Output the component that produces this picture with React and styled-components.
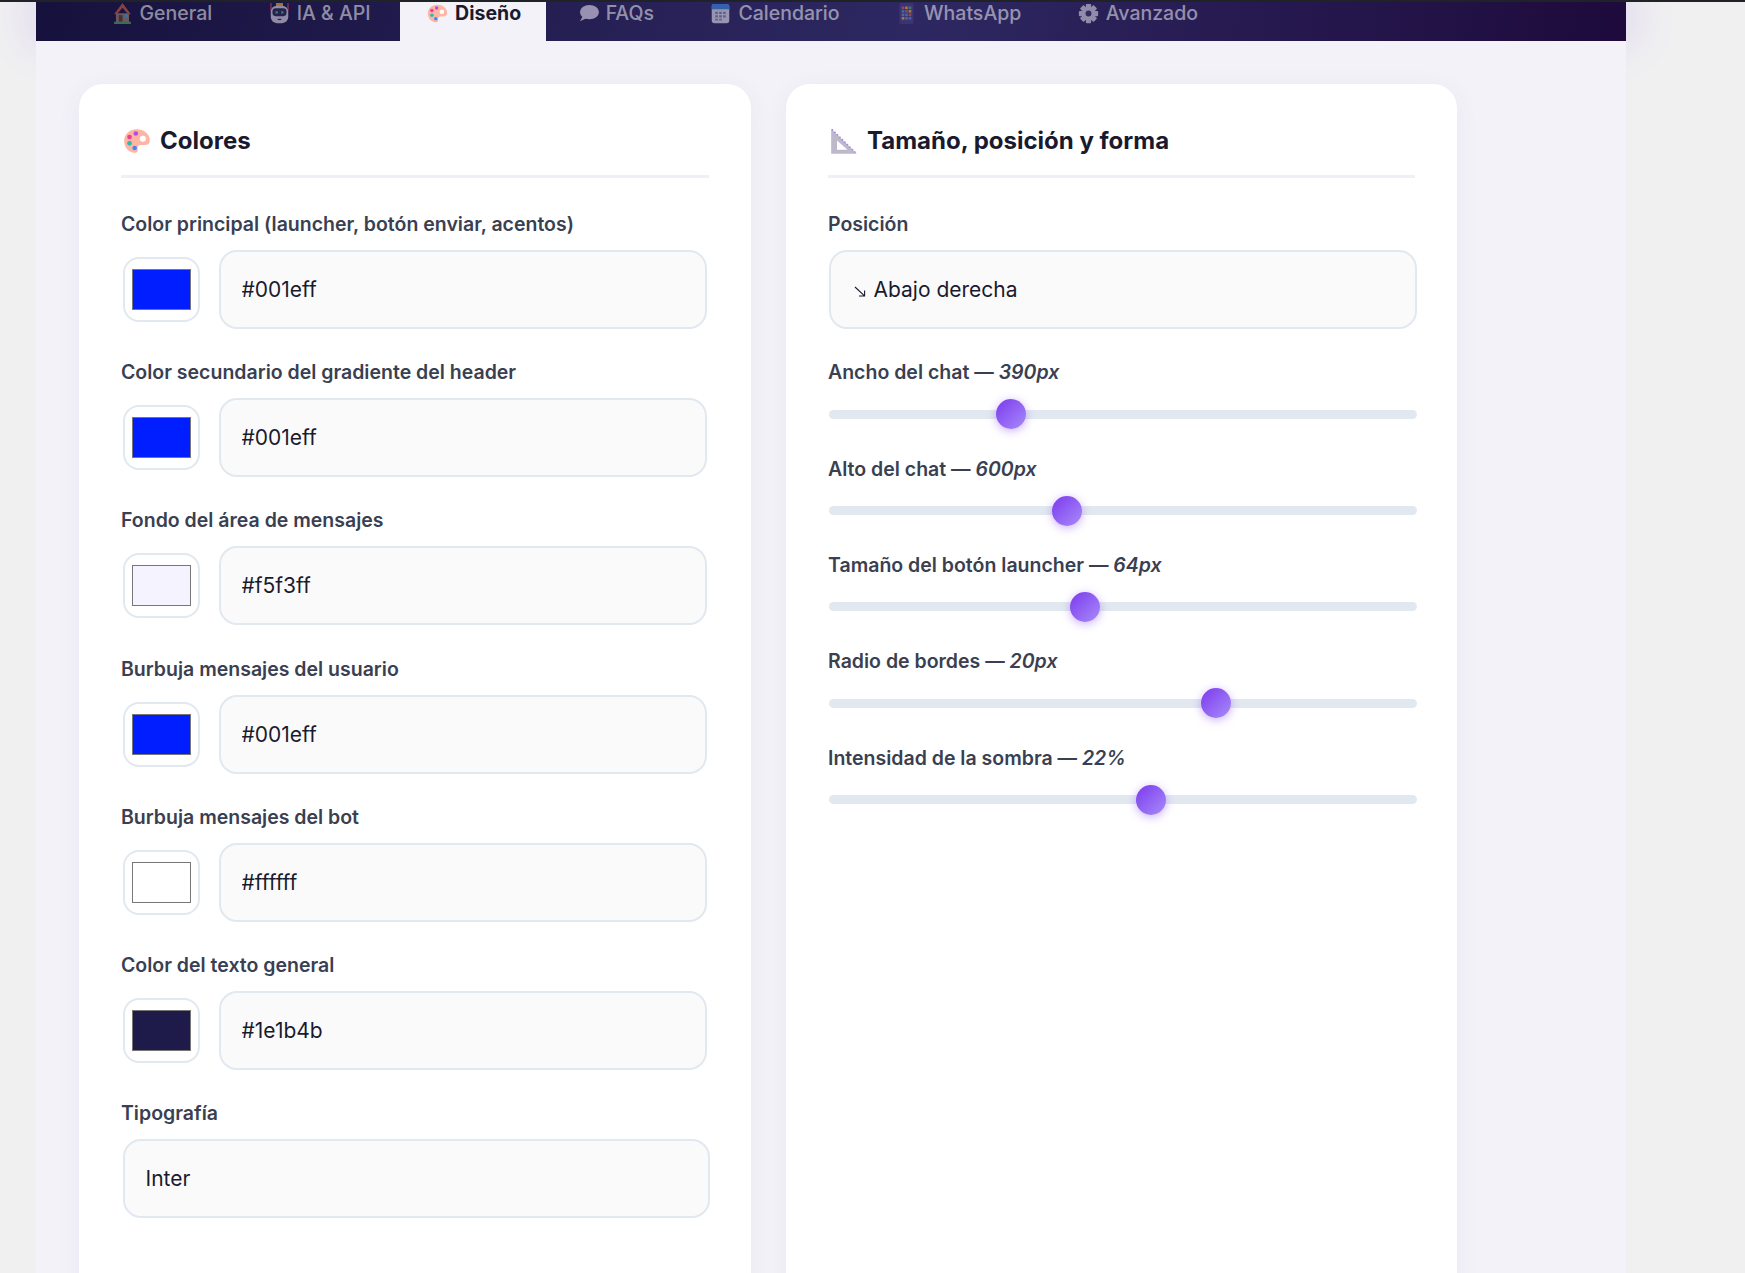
import React from 'react';
import styled, { createGlobalStyle } from 'styled-components';

const GlobalStyle = createGlobalStyle`
  html, body {
    margin: 0;
    padding: 0;
    height: 100%;
    overflow: hidden;
    background: #f0f0f1;
    font-family: Inter, "Liberation Sans", sans-serif;
  }
  * { box-sizing: border-box; }
`;

const TopLine = styled.div`
  position: relative;
  z-index: 2;
  height: 2px;
  background: #1f2328;
`;

const Glow = styled.div`
  position: absolute;
  top: 2px;
  left: 36px;
  width: 1590px;
  height: 30px;
  box-shadow: 0 0 50px rgba(124, 58, 237, 0.32);
`;

const Shell = styled.div`
  position: relative;
  width: 1590px;
  height: 1271px;
  margin-left: 36px;
  background: #f3f2f8;
`;

const TabBar = styled.nav`
  display: flex;
  gap: 4.5px;
  height: 39px;
  padding-left: 48.5px;
  background: linear-gradient(100deg, #16113c 0%, #2e2862 55%, #1e0a3c 100%);
`;

const Tab = styled.button`
  display: flex;
  align-items: flex-start;
  height: 39px;
  padding: 1px 25px 0;
  border: 0;
  border-radius: 0;
  cursor: pointer;
  font-family: inherit;
  font-size: 19.5px;
  line-height: 20px;
  font-weight: ${p => (p.$active ? 700 : 500)};
  background: ${p => (p.$active ? '#f3f2f8' : 'transparent')};
  color: ${p => (p.$active ? '#1a1a2e' : 'rgba(255, 255, 255, 0.52)')};
`;

const TabIcon = styled.span`
  display: flex;
  justify-content: center;
  width: 25px;
  height: 20px;
  margin-right: 5px;
  opacity: ${p => (p.$active ? 1 : 0.58)};
  svg { display: block; width: 21px; height: 21px; }
`;

const Grid = styled.div`
  display: grid;
  grid-template-columns: 672px 671px;
  gap: 35px;
  padding: 43px 0 0 43px;
`;

const Card = styled.section`
  height: 1300px;
  padding: 41.5px 42px;
  background: #fff;
  border-radius: 24px;
  box-shadow: 0 4px 24px rgba(80, 60, 160, 0.06);
`;

const CardTitle = styled.h2`
  display: flex;
  align-items: center;
  gap: 9px;
  height: 30px;
  margin: 0 0 34px;
  box-sizing: content-box;
  padding-bottom: 19.5px;
  border-bottom: 3px solid #f0eff8;
  font-size: 24px;
  line-height: 30px;
  font-weight: 700;
  color: #1a1a2e;
  svg { display: block; width: 28px; height: 28px; flex: none; margin-left: 2px; }
`;

const Field = styled.div`
  margin-bottom: 31.2px;
`;

const Label = styled.label`
  display: block;
  margin-bottom: 14px;
  font-size: 19.5px;
  line-height: 24px;
  font-weight: 600;
  color: #3a3f52;
  em { font-weight: 600; font-style: italic; }
`;

const ColorRow = styled.div`
  display: flex;
  align-items: center;
  gap: 19px;
  width: 583.5px;
  margin-left: 2px;
`;

const Swatch = styled.input`
  flex: none;
  width: 77px;
  height: 65px;
  padding: 0;
  background: #fff;
  border: 2px solid #e2e8f0;
  border-radius: 16px;
  cursor: pointer;

  &::-webkit-color-swatch-wrapper {
    padding: 10px 7px 12px;
    height: 100%;
  }
  &::-webkit-color-swatch {
    height: 100%;
    border: 1px solid #777;
    border-radius: 0;
  }
`;

const TextInput = styled.input`
  flex: 1;
  min-width: 0;
  height: 79px;
  padding: 0 20.5px;
  background: #fafafa;
  border: 2px solid #e2e8f0;
  border-radius: 18px;
  outline: none;
  font-family: inherit;
  font-size: 21px;
  color: #1a1a2e;
`;

const SelectBox = styled.div`
  display: flex;
  align-items: center;
  gap: 8px;
  width: ${p => (p.$wide ? '587.5px' : '587px')};
  height: 79px;
  margin-left: ${p => (p.$wide ? '1px' : '2px')};
  padding: 0 20.5px;
  background: #fafafa;
  border: 2px solid #e2e8f0;
  border-radius: 18px;
  cursor: pointer;
  font-size: 21px;
  color: #1a1a2e;
  svg { display: block; width: 12px; height: 11px; flex: none; margin-top: 4px; margin-left: 2px; }
`;

const SliderField = styled.div`
  margin-bottom: 27.4px;
  ${Label} { margin-bottom: 15px; }
`;

const Range = styled.input`
  display: block;
  width: 588px;
  height: 30px;
  margin: 0 0 0 1px;
  background: transparent;
  appearance: none;
  cursor: pointer;

  &::-webkit-slider-runnable-track {
    height: 9px;
    border-radius: 5px;
    background: #e2e8f0;
  }
  &::-webkit-slider-thumb {
    appearance: none;
    width: 30px;
    height: 30px;
    margin-top: -10.5px;
    border-radius: 50%;
    background: linear-gradient(135deg, #7c3aed, #a78bfa);
    box-shadow: 0 2px 10px rgba(124, 58, 237, 0.4);
  }
`;

const House = () => (
  <svg viewBox="2.500 1 19 22.500">
    <path d="M5 12h14v10H5z" fill="#a98a6e" />
    <path d="M12 1 3 13h3l6-7 6 7h3z" fill="#d9633f" />
    <path d="M8 14h4v8H8z" fill="#6b4630" />
    <path d="M14 13h4v4h-4z" fill="#4fb0ea" />
    <path d="M3 21h18v2.500H3z" fill="#4fb06a" />
  </svg>
);

const Robot = () => (
  <svg viewBox="0 0 24 24">
    <path d="M1.500 0H3v9H1.500zM21 0h1.500v9H21z" fill="#d8476b" />
    <path d="M8 0h8v4H8z" fill="#f2b53c" />
    <rect x="2" y="3" width="20" height="20" rx="7" fill="#e6dff0" />
    <rect x="4" y="6" width="16" height="9" rx="3.500" fill="#2c2c4a" />
    <path d="M7.500 9.500H10v2.500H7.500zM14 9.500h2.500v2.500H14z" fill="#4fc3f0" />
    <path d="M10 18h4v1.500h-4z" fill="#2c2c4a" />
  </svg>
);

const Palette = () => (
  <svg viewBox="0 0 24 24">
    <path d="M11.500 2C5.500 2 1 6.500 1 12c0 5.500 4 10 9 10 2.500 0 3-1.500 2.500-3-.6-2 .8-3.500 3-3.500h3.200c2.600 0 4.300-1.500 4.300-4C23 6 18 2 11.500 2z" fill="#ffb5a3" />
    <circle cx="17" cy="10" r="2.600" fill="#fff" />
    <circle cx="11" cy="5.600" r="2" fill="#b14fe4" />
    <circle cx="5.600" cy="8.600" r="2" fill="#ef3f8f" />
    <circle cx="5.600" cy="14" r="2" fill="#2fb7b2" />
    <circle cx="10" cy="18" r="2" fill="#4b86f0" />
  </svg>
);

const Ruler = () => (
  <svg viewBox="0 0 24 24">
    <path d="M1 1.500 23 23H1z" fill="#bdb8ca" />
    <path d="M6 11.500 15 19.500H6z" fill="#fff" />
    <path d="M1.600 2 22.600 22.800" stroke="#a98be8" strokeWidth="1.400" strokeDasharray="1.400 1.600" fill="none" />
  </svg>
);

const Bubble = () => (
  <svg viewBox="1 1 22 22">
    <ellipse cx="13" cy="10.500" rx="10" ry="7.500" fill="#ece4f4" />
    <path d="M6 15 3 20l7-3z" fill="#ece4f4" />
  </svg>
);

const Calendar = () => (
  <svg viewBox="0 0 24 24">
    <rect x="2" y="1" width="20" height="22" rx="3" fill="#e8e6f2" />
    <path d="M2 7V4a3 3 0 0 1 3-3h14a3 3 0 0 1 3 3v3z" fill="#3f8fe8" />
    <path d="M6 10h3v2.500H6zM10.500 10h3v2.500h-3zM15 10h3v2.500h-3zM6 14h3v2.500H6zM10.500 14h3v2.500h-3zM15 14h3v2.500h-3zM6 18h3v2H6zM10.500 18h3v2h-3z" fill="#8b8aa8" />
  </svg>
);

const Phone = () => (
  <svg viewBox="0 0 24 24">
    <rect x="4" y="0" width="16" height="24" rx="2" fill="#4a3a80" />
    <path d="M6.500 4h3v3h-3z" fill="#e05a4a" />
    <path d="M10.500 4h3v3h-3z" fill="#e8b83c" />
    <path d="M14.500 4h3v3h-3z" fill="#4fb06a" />
    <path d="M6.500 8h3v3h-3z" fill="#4f90ea" />
    <path d="M10.500 8h3v3h-3z" fill="#e05a4a" />
    <path d="M14.500 8h3v3h-3z" fill="#e8b83c" />
    <path d="M6.500 12h3v3h-3z" fill="#4fb06a" />
    <path d="M10.500 12h3v3h-3z" fill="#4f90ea" />
    <path d="M14.500 12h3v3h-3z" fill="#e05a4a" />
    <path d="M6.500 16h3v3h-3z" fill="#e8b83c" />
    <path d="M10.500 16h3v3h-3z" fill="#4fb06a" />
    <path d="M14.500 16h3v3h-3z" fill="#4f90ea" />
  </svg>
);

const Gear = () => (
  <svg viewBox="0 0 24 24">
    {[0, 45, 90, 135].map(a => (
      <rect key={a} x="9" y="1" width="6" height="22" rx="1" fill="#dcd9e6" transform={`rotate(${a} 12 12)`} />
    ))}
    <circle cx="12" cy="12" r="8" fill="#dcd9e6" />
    <circle cx="12" cy="12" r="3.400" fill="#3a3468" />
  </svg>
);

const ArrowDownRight = () => (
  <svg viewBox="0 0 12 11" fill="none" stroke="#1a1a2e" strokeWidth="1.100">
    <path d="M1 1 10.500 9.800M10.600 4.500v5.500H5" />
  </svg>
);

const tabs = [
  { name: 'General', icon: <House /> },
  { name: 'IA & API', icon: <Robot /> },
  { name: 'Diseño', icon: <Palette />, active: true },
  { name: 'FAQs', icon: <Bubble /> },
  { name: 'Calendario', icon: <Calendar /> },
  { name: 'WhatsApp', icon: <Phone /> },
  { name: 'Avanzado', icon: <Gear /> },
];

const colors = [
  { label: 'Color principal (launcher, botón enviar, acentos)', value: '#001eff' },
  { label: 'Color secundario del gradiente del header', value: '#001eff' },
  { label: 'Fondo del área de mensajes', value: '#f5f3ff' },
  { label: 'Burbuja mensajes del usuario', value: '#001eff' },
  { label: 'Burbuja mensajes del bot', value: '#ffffff' },
  { label: 'Color del texto general', value: '#1e1b4b' },
];

const sliders = [
  { label: 'Ancho del chat', value: 390, unit: 'px', min: 300, max: 600 },
  { label: 'Alto del chat', value: 600, unit: 'px', min: 400, max: 900 },
  { label: 'Tamaño del botón launcher', value: 64, unit: 'px', min: 48, max: 85 },
  { label: 'Radio de bordes', value: 20, unit: 'px', min: 0, max: 30 },
  { label: 'Intensidad de la sombra', value: 22, unit: '%', min: 0, max: 40 },
];

export default function App() {
  return (
    <>
      <GlobalStyle />
      <TopLine />
      <Glow />
      <Shell>
        <TabBar>
          {tabs.map(t => (
            <Tab key={t.name} $active={t.active}>
              <TabIcon $active={t.active}>{t.icon}</TabIcon>
              {t.name}
            </Tab>
          ))}
        </TabBar>
        <Grid>
          <Card>
            <CardTitle><Palette />Colores</CardTitle>
            {colors.map(c => (
              <Field key={c.label}>
                <Label>{c.label}</Label>
                <ColorRow>
                  <Swatch type="color" defaultValue={c.value} />
                  <TextInput type="text" defaultValue={c.value} />
                </ColorRow>
              </Field>
            ))}
            <Field>
              <Label>Tipografía</Label>
              <SelectBox>Inter</SelectBox>
            </Field>
          </Card>
          <Card>
            <CardTitle><Ruler />Tamaño, posición y forma</CardTitle>
            <Field>
              <Label>Posición</Label>
              <SelectBox $wide><ArrowDownRight />Abajo derecha</SelectBox>
            </Field>
            {sliders.map(s => (
              <SliderField key={s.label}>
                <Label>{s.label} — <em>{s.value}{s.unit}</em></Label>
                <Range type="range" min={s.min} max={s.max} defaultValue={s.value} />
              </SliderField>
            ))}
          </Card>
        </Grid>
      </Shell>
    </>
  );
}
